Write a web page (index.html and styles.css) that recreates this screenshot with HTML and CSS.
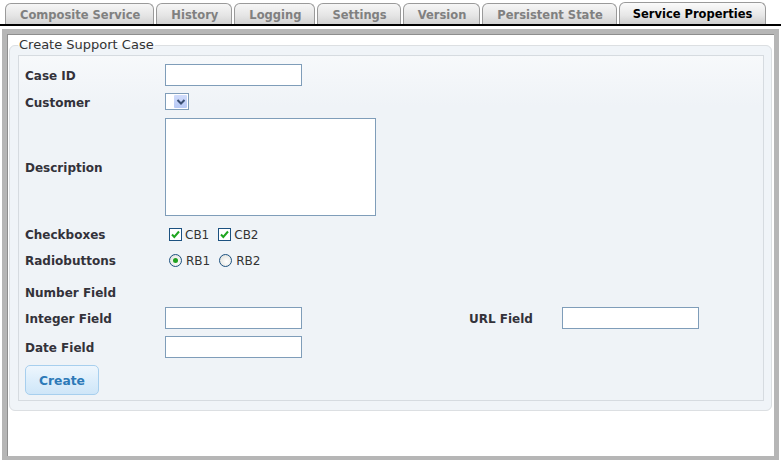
FILE: index.html
```html
<!DOCTYPE html>
<html>
<head>
<meta charset="utf-8">
<link rel="stylesheet" href="styles.css">
</head>
<body>
<div class="tabbar">
  <div class="tab">Composite Service</div>
  <div class="tab">History</div>
  <div class="tab">Logging</div>
  <div class="tab">Settings</div>
  <div class="tab">Version</div>
  <div class="tab">Persistent State</div>
  <div class="tab active">Service Properties</div>
</div>
<div class="frame">
  <fieldset class="group">
    <legend>Create Support Case</legend>
    <div class="panel">
      <div class="row r-input first">
        <label class="lbl">Case ID</label>
        <div class="cell"><input class="text" type="text"></div>
      </div>
      <div class="row r-select">
        <label class="lbl">Customer</label>
        <div class="cell">
          <div class="select">
            <span class="sel-btn"><svg width="10" height="8" viewBox="0 0 10 8"><path d="M1.5 2 L5 5.5 L8.5 2" fill="none" stroke="#3a4f73" stroke-width="2"/></svg></span>
          </div>
        </div>
      </div>
      <div class="row r-area">
        <label class="lbl">Description</label>
        <div class="cell"><textarea class="area"></textarea></div>
      </div>
      <div class="row r-check">
        <label class="lbl">Checkboxes</label>
        <div class="cell opts">
          <span class="opt"><span class="cb"><svg width="11" height="11" viewBox="0 0 11 11"><path d="M2 5.5 L4.3 8 L9 2.5" fill="none" stroke="#1fa51f" stroke-width="2"/></svg></span>CB1</span>
          <span class="opt"><span class="cb"><svg width="11" height="11" viewBox="0 0 11 11"><path d="M2 5.5 L4.3 8 L9 2.5" fill="none" stroke="#1fa51f" stroke-width="2"/></svg></span>CB2</span>
        </div>
      </div>
      <div class="row r-radio">
        <label class="lbl">Radiobuttons</label>
        <div class="cell opts">
          <span class="opt"><span class="rb checked"></span>RB1</span>
          <span class="opt"><span class="rb"></span>RB2</span>
        </div>
      </div>
      <div class="row r-num">
        <label class="lbl">Number Field</label>
      </div>
      <div class="row r-input">
        <label class="lbl">Integer Field</label>
        <div class="cell"><input class="text" type="text"></div>
        <label class="lbl">URL Field</label>
        <div class="cell"><input class="text" type="text"></div>
      </div>
      <div class="row r-input">
        <label class="lbl">Date Field</label>
        <div class="cell"><input class="text" type="text"></div>
      </div>
      <div class="row r-btn">
        <button class="btn">Create</button>
      </div>
    </div>
  </fieldset>
</div>
</body>
</html>
```
FILE: styles.css
```css
html, body {
  margin: 0;
  padding: 0;
  background: #ffffff;
}
body {
  width: 781px;
  height: 460px;
  overflow: hidden;
  font-family: "DejaVu Sans", Verdana, sans-serif;
}
.tabbar {
  display: flex;
  align-items: flex-end;
  gap: 2px;
  height: 24px;
  padding-left: 5px;
  border-bottom: 2px solid #000;
}
.tab {
  height: 20px;
  line-height: 22px;
  padding: 0 13px 0 14px;
  font-size: 11.5px;
  font-weight: bold;
  color: #808080;
  border: 1px solid #9a9a9a;
  border-bottom: none;
  border-radius: 6px 6px 0 0;
  background: linear-gradient(#f6f6f6, #e4e4e4 60%, #d2d2d2);
  white-space: nowrap;
}
.tab.active {
  height: 21px;
  line-height: 23px;
  color: #000;
  padding: 0 13px;
  background: linear-gradient(#fbfbfb, #e6e6e6 60%, #cdcdcd);
}
.frame {
  margin: 3px 2px 0 2px;
  height: 422px;
  border: 5px solid #b6b6b6;
  border-bottom-width: 4px;
  box-shadow: inset 1px 1px 0 #8e8e8e;
  background: #fff;
  padding: 0 2px;
}
.group {
  margin: 3px 0 0 0;
  padding: 0 7px 9px 8px;
  border: 1px solid #dcdfe2;
  border-radius: 6px;
  background: #f0f4f8;
}
.group legend {
  padding: 0 1px;
  font-size: 13px;
  line-height: 16px;
  color: #333;
}
.panel {
  margin-top: 2px;
  border: 1px solid #d6dbe0;
  padding: 8px 6px 5px 6px;
  background: linear-gradient(#f7f9fb, #eff3f7 50px, #eff3f7);
}
.row {
  display: grid;
  grid-template-columns: 140px 304px 93px 1fr;
  align-items: center;
}
.r-input { height: 22px; margin-top: 7px; }
.r-input.first { margin-top: 0; }
.r-select { height: 17px; margin-top: 7px; }
.r-area { height: 98px; margin-top: 8px; }
.r-check { height: 16px; margin-top: 10px; }
.r-radio { height: 16px; margin-top: 10px; }
.r-num { height: 16px; margin-top: 16px; }
.r-btn { height: 30px; margin-top: 7px; display: flex; }
.lbl {
  font-size: 12px;
  font-weight: bold;
  color: #33323a;
  white-space: nowrap;
  padding-top: 2px;
}
.cell {
  display: flex;
  align-items: center;
}
.text {
  box-sizing: border-box;
  width: 137px;
  height: 22px;
  margin: 0;
  border: 1px solid #7f9db9;
  background: #fff;
  padding: 0 3px;
}
.area {
  box-sizing: border-box;
  width: 211px;
  height: 98px;
  margin: 0;
  border: 1px solid #7f9db9;
  background: #fff;
  resize: none;
}
.select {
  box-sizing: border-box;
  width: 24px;
  height: 17px;
  border: 1px solid #7f9db9;
  background: #fff;
  display: flex;
  justify-content: flex-end;
  padding: 1px;
}
.sel-btn {
  width: 13px;
  height: 13px;
  background: linear-gradient(#d0dcfb, #b8c9f5);
  border-radius: 1px;
  display: flex;
  align-items: center;
  justify-content: center;
}
.opts {
  padding-left: 4px;
  gap: 9px;
}
.opt {
  display: flex;
  align-items: center;
  gap: 3px;
  font-size: 12px;
  color: #333;
  padding-top: 1px;
}
.cb {
  box-sizing: border-box;
  width: 13px;
  height: 13px;
  border: 1px solid #1c5180;
  background: #fff;
  display: flex;
  align-items: center;
  justify-content: center;
}
.rb {
  box-sizing: border-box;
  width: 13px;
  height: 13px;
  border: 1px solid #1c5180;
  border-radius: 50%;
  background: radial-gradient(circle at 60% 60%, #ffffff, #dcdcd6);
  display: flex;
  align-items: center;
  justify-content: center;
  margin-right: 1px;
}
.rb.checked::after {
  content: "";
  width: 5px;
  height: 5px;
  border-radius: 50%;
  background: #21a121;
}
.btn {
  box-sizing: border-box;
  width: 74px;
  height: 30px;
  margin: 0;
  border: 1px solid #a7cfee;
  border-radius: 5px;
  background: linear-gradient(#eef6fd, #ddeefb 50%, #cfe6f8);
  color: #2d7ab8;
  font-family: "DejaVu Sans", Verdana, sans-serif;
  font-size: 12.3px;
  font-weight: bold;
  padding: 2px 0 0 0;
}
```
